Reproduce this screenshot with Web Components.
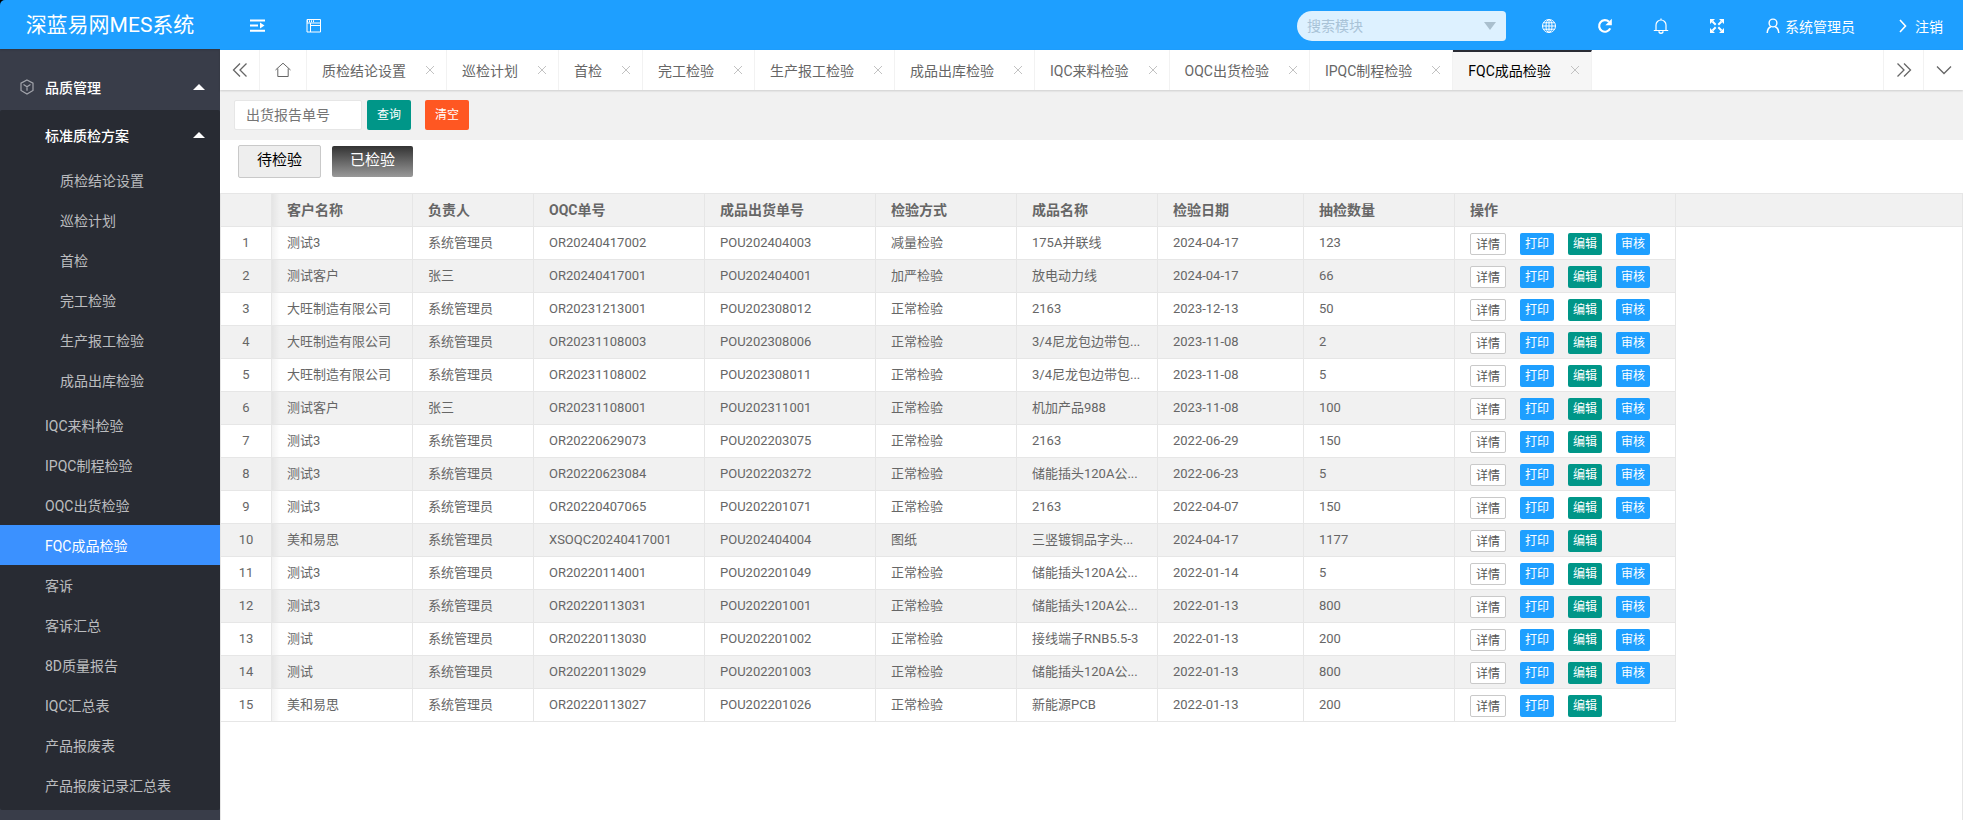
<!DOCTYPE html>
<html lang="zh-CN">
<head>
<meta charset="utf-8">
<title>深蓝易网MES系统</title>
<style>
    html, body {
        margin: 0;
        height: 100%;
    }

    body {
        font-family: Roboto, "Noto Sans CJK SC", sans-serif;
        font-size: 14px;
        color: #666;
        background: #fff;
    }
</style>
</head>
<body>
<mes-app></mes-app>

<script>
const ICONS = {
    shrink: '<path d="M0 2.5h15M0 7.5h8M0 12.8h15" stroke-width="2"/><path d="M10 4.5l4.5 3-4.5 3z" fill="currentColor" stroke="none"/>',
    window: '<path d="M1 1.5h13.5v12.5H1zM1 5h13.5M4.5 5v9M4.5 7.5h10"/><path d="M1 3.2h7" stroke-dasharray="1 1" stroke-width="2"/>',
    globe: '<circle cx="8" cy="8" r="6.5"/><ellipse cx="8" cy="8" rx="3" ry="6.5"/><path d="M8 1.5v13M1.5 8h13M2.4 4.8h11.2M2.4 11.2h11.2"/>',
    refresh: '<path d="M13.2 10.4A5.8 5.8 0 1 1 12 3.8" stroke-width="2.2"/><path d="M14.8.8v6.4H8.4z" fill="currentColor" stroke="none"/>',
    bell: '<path d="M.8 12.5h14.4M3 12.5V7a5 5 0 0 1 10 0v5.5M8 2V.6" stroke-width="1.2"/><path d="M6 13.2a2 2 0 0 0 4 0" stroke-width="1.4"/>',
    expand: '<path d="M3.5 3.5l3.2 3.2M12.500 3.5L9.300 6.700M3.500 12.500l3.200-3.200M12.500 12.500L9.300 9.300" stroke-width="2"/><path d="M1 1h5L1 6zM15 1v5l-5-5zM1 15v-5l5 5zM15 15h-5l5-5z" fill="currentColor" stroke="none"/>',
    user: '<circle cx="8" cy="5" r="3.900" stroke-width="1.400"/><path d="M2.200 15c.2-3.500 1.500-5.200 3.600-6.200M13.800 15c-.2-3.500-1.500-5.200-3.600-6.200" stroke-width="1.500"/>',
    right: '<path d="M5 2l5.500 6L5 14" stroke-width="1.600"/>',
    prev: '<path d="M8 1.500L1.500 8 8 14.500M14.500 1.500L8 8l6.500 6.500" stroke-width="1.300"/>',
    next: '<path d="M1.500 1.500L8 8l-6.500 6.500M8 1.500L14.500 8 8 14.500" stroke-width="1.300"/>',
    down: '<path d="M1 4.500l7 7 7-7" stroke-width="1.300"/>',
    home: '<path d="M.5 8L8 1.200 15.500 8M2.800 6.500v8h10.400v-8"/>',
    close: '<path d="M4 4l8 8M12 4l-8 8"/>',
    cube: '<path d="M8 1l6 3.200v7.300L8 15l-6-3.500V4.200zM4.500 5.500L8 7.800l3.500-2.300M8 7.800v4" stroke-width="1.200"/>'
}

const MENU = [
    ['IQC来料检验'], ['IPQC制程检验'], ['OQC出货检验'], ['FQC成品检验', true], ['客诉'],
    ['客诉汇总'], ['8D质量报告'], ['IQC汇总表'], ['产品报废表'], ['产品报废记录汇总表']
]
const SUBMENU = ['质检结论设置', '巡检计划', '首检', '完工检验', '生产报工检验', '成品出库检验']
const TABS = [...SUBMENU, 'IQC来料检验', 'OQC出货检验', 'IPQC制程检验', 'FQC成品检验']

const COLUMNS = [
    ['', 51], ['客户名称', 141], ['负责人', 121], ['OQC单号', 171], ['成品出货单号', 171],
    ['检验方式', 141], ['成品名称', 141], ['检验日期', 146], ['抽检数量', 151], ['操作', 221]
]
const ROWS = [
    ['测试3', '系统管理员', 'OR20240417002', 'POU202404003', '减量检验', '175A并联线', '2024-04-17', '123'],
    ['测试客户', '张三', 'OR20240417001', 'POU202404001', '加严检验', '放电动力线', '2024-04-17', '66'],
    ['大旺制造有限公司', '系统管理员', 'OR20231213001', 'POU202308012', '正常检验', '2163', '2023-12-13', '50'],
    ['大旺制造有限公司', '系统管理员', 'OR20231108003', 'POU202308006', '正常检验', '3/4尼龙包边带包...', '2023-11-08', '2'],
    ['大旺制造有限公司', '系统管理员', 'OR20231108002', 'POU202308011', '正常检验', '3/4尼龙包边带包...', '2023-11-08', '5'],
    ['测试客户', '张三', 'OR20231108001', 'POU202311001', '正常检验', '机加产品988', '2023-11-08', '100'],
    ['测试3', '系统管理员', 'OR20220629073', 'POU202203075', '正常检验', '2163', '2022-06-29', '150'],
    ['测试3', '系统管理员', 'OR20220623084', 'POU202203272', '正常检验', '储能插头120A公...', '2022-06-23', '5'],
    ['测试3', '系统管理员', 'OR20220407065', 'POU202201071', '正常检验', '2163', '2022-04-07', '150'],
    ['美和易思', '系统管理员', 'XSOQC20240417001', 'POU202404004', '图纸', '三竖镀铜品字头...', '2024-04-17', '1177'],
    ['测试3', '系统管理员', 'OR20220114001', 'POU202201049', '正常检验', '储能插头120A公...', '2022-01-14', '5'],
    ['测试3', '系统管理员', 'OR20220113031', 'POU202201001', '正常检验', '储能插头120A公...', '2022-01-13', '800'],
    ['测试', '系统管理员', 'OR20220113030', 'POU202201002', '正常检验', '接线端子RNB5.5-3', '2022-01-13', '200'],
    ['测试', '系统管理员', 'OR20220113029', 'POU202201003', '正常检验', '储能插头120A公...', '2022-01-13', '800'],
    ['美和易思', '系统管理员', 'OR20220113027', 'POU202201026', '正常检验', '新能源PCB', '2022-01-13', '200']
]
// rows that cannot be reviewed
const NO_REVIEW = [10, 15]

class BaseElement extends HTMLElement {
    constructor() {
        super();
        this.shadowDOM = this.attachShadow({mode: 'open'});
    }

    connectedCallback() {
        this.render()
    }
}

class MesIcon extends BaseElement {
    render() {
        this.shadowDOM.innerHTML = `
        <style>
            :host {
                display: inline-block;
                width: 16px;
                height: 16px;
                flex: none;
            }

            svg {
                display: block;
                width: 100%;
                height: 100%;
                fill: none;
                stroke: currentColor;
            }
        </style>
        <svg viewBox="0 0 16 16" aria-hidden="true">${ICONS[this.getAttribute('name')]}</svg>
        `
    }
}

class MesButton extends BaseElement {
    render() {
        this.shadowDOM.innerHTML = `
        <style>
            :host {
                display: inline-block;
            }

            button {
                display: block;
                box-sizing: border-box;
                height: 22px;
                padding: 0 5px;
                border: 0;
                border-radius: 2px;
                font: inherit;
                font-size: 12px;
                line-height: 22px;
                color: #fff;
                background: #1e9fff;
                cursor: pointer;
            }

            :host([kind="green"]) button {
                background: #009688;
            }

            :host([kind="red"]) button {
                background: #ff5722;
            }

            :host([kind="plain"]) button {
                border: 1px solid #c9c9c9;
                color: #555;
                background: #fff;
            }

            :host([size="sm"]) button {
                height: 30px;
                padding: 0 10px;
                line-height: 30px;
            }

            :host([kind="light"]) button,
            :host([kind="dark"]) button {
                height: 33px;
                padding: 0 18px;
                font-size: 15px;
                line-height: 28px;
            }

            :host([kind="light"]) button {
                padding-bottom: 3px;
                border: 1px solid #c9c9c9;
                color: #000;
                background: #eee;
            }

            :host([kind="dark"]) button {
                height: 31px;
                padding-bottom: 3px;
                background: linear-gradient(#333, #999);
            }
        </style>
        <button type="button"><slot></slot></button>
        `
    }
}

class MesHeader extends BaseElement {
    render() {
        this.shadowDOM.innerHTML = `
        <style>
            :host {
                display: flex;
                align-items: center;
                height: 50px;
                color: #fff;
                background: #1e9fff;
            }

            a {
                display: flex;
                align-items: center;
                justify-content: center;
                box-sizing: border-box;
                height: 50px;
                min-width: 56px;
                padding: 2px 20px 0;
                color: inherit;
                text-decoration: none;
            }

            .tools {
                display: flex;
                padding-left: 10px;
            }

            .right {
                display: flex;
                align-items: center;
                margin-left: auto;
            }

            .user {
                gap: 4px;
            }

            .search {
                display: grid;
                align-items: center;
                width: 209px;
                margin: 2px 15px 0 0;
            }

            .search select,
            .search i {
                grid-area: 1 / 1;
            }

            select {
                appearance: none;
                box-sizing: border-box;
                width: 100%;
                height: 30px;
                padding: 0 10px;
                border: 0;
                border-radius: 16px 4px 4px 16px;
                font: inherit;
                color: #a9c3d7;
                background: #ddf1ff;
            }

            .search i {
                justify-self: end;
                margin-right: 10px;
                border: 6px solid transparent;
                border-top: 8px solid #a9bfce;
                border-bottom: 0;
                pointer-events: none;
            }
        </style>
        <nav class="tools">
            <a href="#" aria-label="侧边伸缩"><mes-icon name="shrink"></mes-icon></a>
            <a href="#" aria-label="窗口"><mes-icon name="window"></mes-icon></a>
        </nav>
        <div class="right">
            <div class="search">
                <select aria-label="搜索模块"><option>搜索模块</option></select>
                <i></i>
            </div>
            <a href="#" aria-label="主页"><mes-icon name="globe"></mes-icon></a>
            <a href="#" aria-label="刷新"><mes-icon name="refresh"></mes-icon></a>
            <a href="#" aria-label="消息"><mes-icon name="bell"></mes-icon></a>
            <a href="#" aria-label="全屏"><mes-icon name="expand"></mes-icon></a>
            <a href="#" class="user"><mes-icon name="user"></mes-icon>系统管理员</a>
            <a href="#" class="user"><mes-icon name="right"></mes-icon>注销</a>
        </div>
        `
    }
}

class MesSidebar extends BaseElement {
    render() {
        this.shadowDOM.innerHTML = `
        <style>
            :host {
                display: block;
                background: #393d49;
            }

            .logo {
                background: #000;
            }

            .logo h1 {
                margin: 0;
                height: 49px;
                border-top-left-radius: 5px;
                box-shadow: 0 1px 2px rgba(0, 0, 0, .15);
                font-size: 21px;
                font-weight: 400;
                line-height: 50px;
                text-align: center;
                color: #fff;
                background: #1e9fff;
            }

            a {
                display: flex;
                align-items: center;
                height: 40px;
                padding: 0 15px 0 45px;
                color: rgba(255, 255, 255, .7);
                text-decoration: none;
            }

            a.open {
                color: #fff;
                font-weight: 500;
            }

            a.open::after {
                content: "";
                margin-left: auto;
                border: 6px solid transparent;
                border-top: 0;
                border-bottom-color: #fff;
            }

            a.root {
                height: 46px;
                margin-top: 15px;
                padding-left: 19px;
                gap: 10px;
            }

            .root mes-icon {
                color: #a3a5ac;
            }

            a.active {
                color: #fff;
                background: #3b91ff;
            }

            .child {
                padding: 5px 0;
                border-radius: 2px;
                background: #282b33;
            }

            .sub {
                padding: 5px 0;
            }

            .sub a {
                padding-left: 60px;
            }
        </style>
        <div class="logo"><h1>深蓝易网MES系统</h1></div>
        <nav>
            <a href="#" class="open root"><mes-icon name="cube"></mes-icon>品质管理</a>
            <div class="child">
                <a href="#" class="open">标准质检方案</a>
                <div class="sub">${SUBMENU.map(t => `<a href="#">${t}</a>`).join('')}</div>
                ${MENU.map(([t, on]) => `<a href="#" class="${on ? 'active' : ''}">${t}</a>`).join('')}
            </div>
        </nav>
        `
    }
}

class MesTabs extends BaseElement {
    render() {
        this.shadowDOM.innerHTML = `
        <style>
            :host {
                display: flex;
                position: relative;
                height: 40px;
                background: #fff;
                box-shadow: 0 1px 2px rgba(0, 0, 0, .15);
            }

            a {
                display: flex;
                align-items: center;
                justify-content: center;
                box-sizing: border-box;
                border-right: 1px solid #f2f2f2;
                color: #666;
                text-decoration: none;
            }

            .ctl {
                width: 40px;
            }

            .home {
                width: 47px;
            }

            .end {
                border-right: 0;
                border-left: 1px solid #f2f2f2;
            }

            .tab {
                gap: 16px;
                padding: 0 8px 0 15px;
                white-space: nowrap;
            }

            .tab mes-icon {
                color: #c2c2c2;
            }

            .active {
                color: #000;
                border-top: 2px solid #292b34;
                padding-bottom: 2px;
                background: #f6f6f6;
            }

            .space {
                flex: 1;
            }
        </style>
        <a href="#" class="ctl" aria-label="向左"><mes-icon name="prev"></mes-icon></a>
        <a href="#" class="home" aria-label="首页"><mes-icon name="home"></mes-icon></a>
        ${TABS.map((t, i) => `<a href="#" class="tab ${i === TABS.length - 1 ? 'active' : ''}">${t}<mes-icon name="close"></mes-icon></a>`).join('')}
        <span class="space"></span>
        <a href="#" class="ctl end" aria-label="向右"><mes-icon name="next"></mes-icon></a>
        <a href="#" class="ctl end" aria-label="更多"><mes-icon name="down"></mes-icon></a>
        `
    }
}

class MesFilter extends BaseElement {
    render() {
        this.shadowDOM.innerHTML = `
        <style>
            :host {
                display: block;
            }

            form {
                display: flex;
                align-items: center;
                height: 50px;
                padding-left: 14px;
                background: #f1f1f1;
            }

            input {
                box-sizing: border-box;
                width: 128px;
                height: 30px;
                margin-right: 5px;
                padding: 0 11px;
                border: 1px solid #e6e6e6;
                border-radius: 2px;
                font: inherit;
                background: #fff;
            }

            input::placeholder {
                color: #757575;
            }

            form mes-button + mes-button {
                margin-left: 14px;
            }

            .status {
                display: flex;
                align-items: center;
                gap: 11px;
                padding: 5px 18px 15px;
            }
        </style>
        <form>
            <input type="text" placeholder="出货报告单号" aria-label="出货报告单号">
            <mes-button kind="green" size="sm">查询</mes-button>
            <mes-button kind="red" size="sm">清空</mes-button>
        </form>
        <div class="status">
            <mes-button kind="light">待检验</mes-button>
            <mes-button kind="dark">已检验</mes-button>
        </div>
        `
    }
}

class MesTable extends BaseElement {
    renderRow(row, i) {
        const review = NO_REVIEW.includes(i + 1) ? '' : '<mes-button>审核</mes-button>'
        return `<tr>
            <td>${i + 1}</td>
            ${row.map(cell => `<td>${cell}</td>`).join('')}
            <td><div class="ops">
                <mes-button kind="plain">详情</mes-button>
                <mes-button>打印</mes-button>
                <mes-button kind="green">编辑</mes-button>
                ${review}
            </div></td>
            <td class="rest"></td>
        </tr>`
    }

    render() {
        this.shadowDOM.innerHTML = `
        <style>
            :host {
                display: block;
                border: 1px solid #e6e6e6;
                border-bottom: 0;
            }

            table {
                width: 100%;
                table-layout: fixed;
                border-collapse: separate;
                border-spacing: 0;
            }

            th, td {
                box-sizing: border-box;
                height: 33px;
                padding: 0 15px;
                border-right: 1px solid #e6e6e6;
                border-bottom: 1px solid #e6e6e6;
                font-size: 13px;
                line-height: 28px;
                text-align: left;
                white-space: nowrap;
            }

            th {
                font-size: 14px;
                font-weight: 700;
                background: #f1f1f1;
            }

            td:first-child {
                padding: 0;
                text-align: center;
            }

            tbody tr:nth-child(even) td {
                background-color: #f1f1f1;
            }

            tr > :nth-child(2) {
                background-image: linear-gradient(to right, rgba(0, 0, 0, .05), transparent 8px);
            }

            th:last-child,
            tbody td.rest {
                border-right: 0;
            }

            tbody tr td.rest {
                border: 0;
                background: none;
            }

            .ops {
                display: flex;
                gap: 14px;
                padding-top: 2px;
            }
        </style>
        <table>
            <colgroup>${COLUMNS.map(([, w]) => `<col style="width: ${w}px">`).join('')}<col></colgroup>
            <thead><tr>${COLUMNS.map(([t]) => `<th>${t}</th>`).join('')}<th></th></tr></thead>
            <tbody>${ROWS.map((row, i) => this.renderRow(row, i)).join('')}</tbody>
        </table>
        `
    }
}

class MesApp extends BaseElement {
    render() {
        this.shadowDOM.innerHTML = `
        <style>
            :host {
                display: grid;
                grid-template-columns: 220px 1fr;
                min-height: 100%;
            }

            main {
                display: flex;
                flex-direction: column;
                min-width: 0;
            }

            mes-table {
                flex: 1;
            }
        </style>
        <mes-sidebar></mes-sidebar>
        <main>
            <mes-header></mes-header>
            <mes-tabs></mes-tabs>
            <mes-filter></mes-filter>
            <mes-table></mes-table>
        </main>
        `
    }
}

customElements.define('mes-icon', MesIcon)
customElements.define('mes-button', MesButton)
customElements.define('mes-header', MesHeader)
customElements.define('mes-sidebar', MesSidebar)
customElements.define('mes-tabs', MesTabs)
customElements.define('mes-filter', MesFilter)
customElements.define('mes-table', MesTable)
customElements.define('mes-app', MesApp)
</script>
</body>
</html>
